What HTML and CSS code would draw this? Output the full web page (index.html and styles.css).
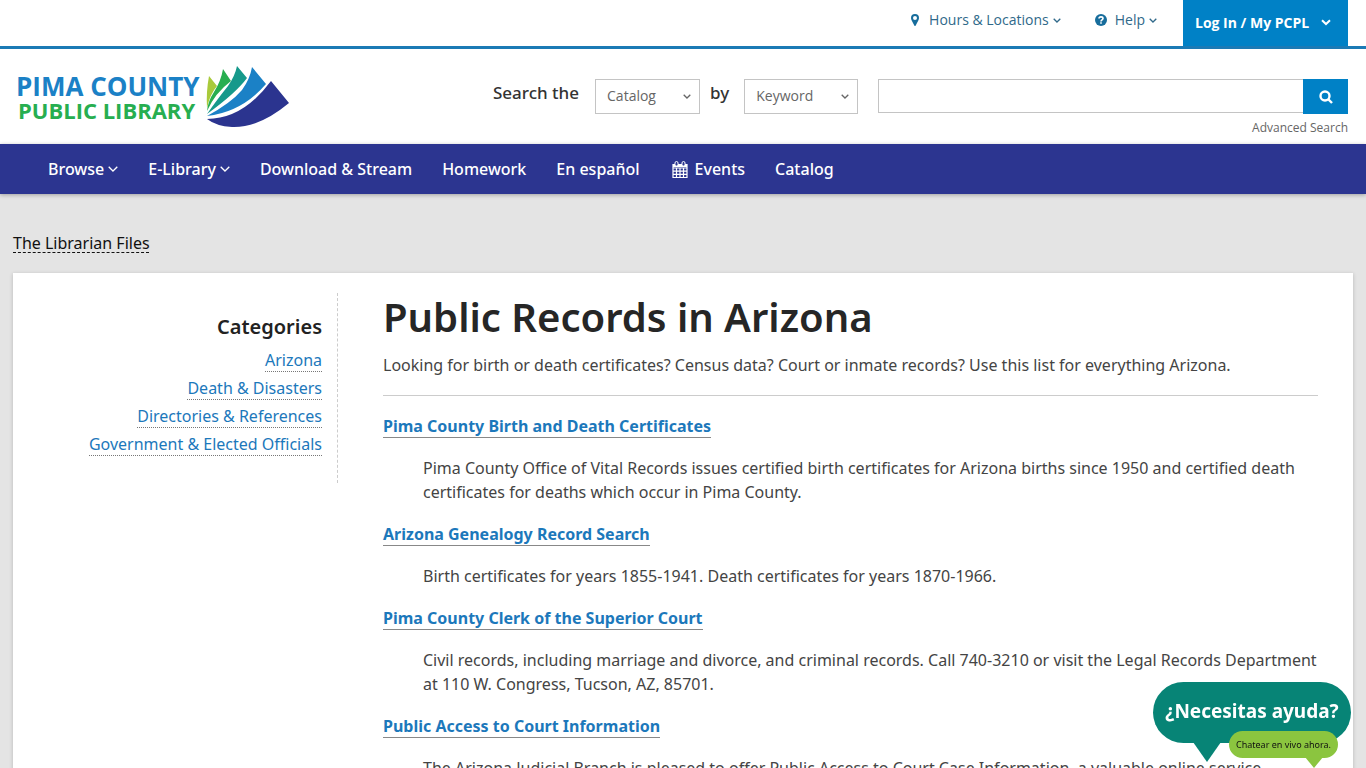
FILE: index.html
```html
<!DOCTYPE html>
<html lang="en">
<head>
    <meta charset="UTF-8">
    <meta name="viewport" content="width=device-width, initial-scale=1.0">
    <title>Public Records in Arizona | Pima County Public Library</title>
    <link rel="stylesheet" href="styles.css">
</head>
<body>

    <div class="top-bar">
        <a href="#" class="top-link">
            <svg class="pin" viewBox="0 0 8 12" width="8" height="12"><path fill-rule="evenodd" d="M4 0a4 4 0 0 1 4 4c0 1-.3 1.600-.7 2.400L4.700 11.500Q4 12.500 3.300 11.500L.7 6.400C.3 5.600 0 5 0 4a4 4 0 0 1 4-4zm0 2a2 2 0 1 0 0 4 2 2 0 0 0 0-4z"/></svg>
            <span>Hours &amp; Locations</span>
            <svg class="caret" viewBox="0 0 8 5" width="8" height="5"><path d="M.7.7 4 4 7.300.7"/></svg>
        </a>
        <a href="#" class="top-link">
            <svg class="help" viewBox="0 0 12 12" width="12" height="12"><circle cx="6" cy="6" r="6"/><path d="M4 4.600C4 2.200 8 2.300 8 4.500 8 5.900 6 5.800 6 7.400" fill="none" stroke="#fff" stroke-width="1.600"/><path d="M5.200 8.200h1.600v1.600H5.200z" fill="#fff"/></svg>
            <span>Help</span>
            <svg class="caret" viewBox="0 0 8 5" width="8" height="5"><path d="M.7.7 4 4 7.300.7"/></svg>
        </a>
        <button class="login">
            <span>Log In / My PCPL</span>
            <svg class="caret bold" viewBox="0 0 10 7" width="10" height="7"><path d="M1 1.200 5 5 9 1.200"/></svg>
        </button>
    </div>

    <header class="header">
        <a href="#" class="logo" aria-label="Pima County Public Library">
            <svg viewBox="0 0 276 64" width="276" height="64">
                <text class="logo-pima" x="0" y="31">PIMA COUNTY</text>
                <text class="logo-public" x="2" y="54">PUBLIC LIBRARY</text>
                <path fill="#a9ca3b" d="M193 11 201 21Q194 29 191 43Q190 27 193 11z"/>
                <path fill="#27ae50" d="M207 4 215 16Q199 28 191 46Q192 36 198 27 205 16 207 4z"/>
                <path fill="#16998b" d="M221 1 231 13Q220 28 191 49Q203 32 212 21 219 11 221 1z"/>
                <path fill="#1b81c6" d="M236 2 250 19Q226 47 191 51Q215 38 226 25 234 14 236 2z"/>
                <path fill="#2b348f" d="M255 16 273 38Q243 63 216 62 200 61 191 54Q227 54 255 16z"/>
            </svg>
        </a>
        <form class="search">
            <label for="source">Search the</label>
            <div class="select">
                <select id="source"><option>Catalog</option><option>Website</option></select>
                <svg class="caret" viewBox="0 0 8 5" width="8" height="5"><path d="M.7.7 4 4 7.300.7"/></svg>
            </div>
            <label for="field" class="by">by</label>
            <div class="select wide">
                <select id="field"><option>Keyword</option><option>Title</option><option>Author</option></select>
                <svg class="caret" viewBox="0 0 8 5" width="8" height="5"><path d="M.7.7 4 4 7.300.7"/></svg>
            </div>
            <div class="query">
                <div class="query-row">
                    <input type="text" aria-label="Search terms">
                    <button type="button" aria-label="Search">
                        <svg viewBox="0 0 14 14" width="14" height="14"><circle cx="6" cy="6" r="4.500"/><path d="m9 9 4 4"/></svg>
                    </button>
                </div>
                <a href="#" class="advanced">Advanced Search</a>
            </div>
        </form>
    </header>

    <nav class="nav">
        <a href="#">Browse <svg class="caret" viewBox="0 0 10 6" width="10" height="6"><path d="M.7.7 5 5 9.300.7"/></svg></a>
        <a href="#">E-Library <svg class="caret" viewBox="0 0 10 6" width="10" height="6"><path d="M.7.7 5 5 9.300.7"/></svg></a>
        <a href="#">Download &amp; Stream</a>
        <a href="#">Homework</a>
        <a href="#">En español</a>
        <a href="#" class="events">
            <svg viewBox="0 0 16 17" width="16" height="17"><path d="M1 3.500h14v13H1zM1 7h14M1 10.200h14M1 13.400h14M4.500 6.500v10M8 6.500v10M11.500 6.500v10" fill="none" stroke="#fff" stroke-width="1.200"/><path d="M1 3h14v3H1z" fill="#fff"/><rect x="3" y=".5" width="3" height="4.500" rx="1.500" fill="#2c3590" stroke="#fff"/><rect x="10" y=".5" width="3" height="4.500" rx="1.500" fill="#2c3590" stroke="#fff"/></svg>
            Events
        </a>
        <a href="#">Catalog</a>
    </nav>

    <div class="page">
        <div class="breadcrumb"><a href="#">The Librarian Files</a></div>

        <div class="card">
            <aside class="sidebar">
                <h2>Categories</h2>
                <ul>
                    <li><a href="#">Arizona</a></li>
                    <li><a href="#">Death &amp; Disasters</a></li>
                    <li><a href="#">Directories &amp; References</a></li>
                    <li><a href="#">Government &amp; Elected Officials</a></li>
                </ul>
            </aside>

            <main class="content">
                <h1>Public Records in Arizona</h1>
                <p class="intro">Looking for birth or death certificates? Census data? Court or inmate records? Use this list for everything Arizona.</p>
                <dl>
                    <dt><a href="#">Pima County Birth and Death Certificates</a></dt>
                    <dd>Pima County Office of Vital Records issues certified birth certificates for Arizona births since 1950 and certified death certificates for deaths which occur in Pima County.</dd>
                    <dt><a href="#">Arizona Genealogy Record Search</a></dt>
                    <dd>Birth certificates for years 1855-1941. Death certificates for years 1870-1966.</dd>
                    <dt><a href="#">Pima County Clerk of the Superior Court</a></dt>
                    <dd>Civil records, including marriage and divorce, and criminal records. Call 740-3210 or visit the Legal Records Department at 110 W. Congress, Tucson, AZ, 85701.</dd>
                    <dt><a href="#">Public Access to Court Information</a></dt>
                    <dd>The Arizona Judicial Branch is pleased to offer Public Access to Court Case Information, a valuable online service</dd>
                </dl>
            </main>
        </div>
    </div>

    <button class="chat">
        <span class="chat-title">¿Necesitas ayuda?</span>
        <span class="chat-sub">Chatear en vivo ahora.</span>
    </button>

</body>
</html>
```

FILE: styles.css
```css
* {
    box-sizing: border-box;
}

body {
    margin: 0;
    background-color: #e4e4e4;
    color: #444;
    font-family: "Noto Sans", sans-serif;
    font-size: 16px;
    line-height: 24px;
}

a {
    color: #1c78bb;
    text-decoration: none;
}

button,
input,
select {
    font-family: inherit;
    margin: 0;
    border-radius: 0;
}

button {
    border: none;
    cursor: pointer;
}

.caret {
    fill: none;
    stroke: currentColor;
    stroke-width: 1.3;
}

.caret.bold {
    stroke-width: 2;
}

/* top bar */
.top-bar {
    display: flex;
    justify-content: flex-end;
    background-color: #fff;
    border-bottom: 3px solid #1b7ab5;
    padding-right: 18px;
    height: 49px;
}

.top-link {
    display: flex;
    align-items: center;
    height: 40px;
    margin-right: 34px;
    color: #30698a;
    font-family: "Open Sans", sans-serif;
    font-size: 14px;
}

.top-link span {
    margin-left: 8px;
    margin-right: 4px;
}

.top-link .pin,
.top-link .help {
    fill: #176d9c;
}

.top-link .pin + span {
    margin-left: 10px;
}

.top-link:nth-child(2) {
    margin-right: 26px;
}

.login {
    display: flex;
    align-items: center;
    gap: 12px;
    width: 165px;
    padding: 0 12px 2px;
    background-color: #0081c6;
    color: #fff;
    font-family: "Open Sans", sans-serif;
    font-size: 14px;
    font-weight: 700;
}

/* header */
.header {
    display: flex;
    justify-content: space-between;
    background-color: #fff;
    height: 95px;
    padding: 16px 18px 0 16px;
}

.logo svg {
    display: block;
}

.logo text {
    font-family: "Open Sans", sans-serif;
    font-weight: 700;
}

.logo-pima {
    fill: #1b81c6;
    font-size: 26px;
}

.logo-public {
    fill: #27ae50;
    font-size: 22px;
}

.search {
    display: flex;
    flex: 1;
    max-width: 855px;
    padding-top: 14px;
}

.search label {
    margin-right: 16px;
    padding-top: 2px;
    color: #333;
    font-size: 17px;
    font-weight: 500;
}

.search .by {
    margin: 0 15px 0 10px;
}

.select {
    position: relative;
    width: 105px;
    height: 35px;
}

.select.wide {
    width: 114px;
}

.select select {
    width: 100%;
    height: 100%;
    padding: 0 11px 2px;
    appearance: none;
    background-color: #fff;
    border: 1px solid #c4c4c4;
    color: #666;
    font-family: "Open Sans", sans-serif;
    font-size: 14px;
}

.select .caret {
    position: absolute;
    right: 9px;
    top: 15px;
    color: #666;
}

.query {
    flex: 1;
    margin-left: 20px;
    text-align: right;
}

.query-row {
    display: flex;
}

.query input {
    flex: 1;
    height: 34px;
    border: 1px solid #c4c4c4;
    border-right: none;
    padding: 0 10px;
}

.query button {
    width: 45px;
    height: 35px;
    padding: 0;
    background-color: #0081c6;
}

.query button svg {
    display: block;
    margin: 0 auto;
    fill: none;
    stroke: #fff;
    stroke-width: 2.4;
}

.advanced {
    color: #666;
    font-family: "Open Sans", sans-serif;
    font-size: 12px;
}

/* navigation */
.nav {
    display: flex;
    align-items: center;
    gap: 30px;
    height: 50px;
    padding-left: 48px;
    background-color: #2c3590;
    box-shadow: 0 1px 4px rgba(0, 0, 0, 0.3);
}

.nav a {
    display: flex;
    align-items: center;
    gap: 4px;
    color: #fff;
    font-weight: 500;
}

.nav .events {
    gap: 7px;
    margin-left: 2px;
}

/* page */
.page {
    padding: 37px 13px 0;
}

.breadcrumb a {
    color: #111;
    text-decoration: underline dashed 1px;
    text-underline-offset: 3px;
    text-decoration-skip-ink: none;
}

.card {
    display: flex;
    align-items: flex-start;
    margin-top: 18px;
    padding: 20px 35px 20px 0;
    background-color: #fff;
    box-shadow: 0 1px 4px rgba(0, 0, 0, 0.2);
}

.sidebar {
    width: 325px;
    height: 190px;
    padding: 21px 15px 0 0;
    border-right: 1px dashed #ccc;
    text-align: right;
}

.sidebar h2 {
    margin: 0 0 8px;
    color: #222;
    font-size: 20px;
    font-weight: 600;
    line-height: 26px;
}

.sidebar ul {
    list-style: none;
    margin: 0;
    padding: 0;
}

.sidebar li {
    height: 28px;
}

.sidebar li a {
    border-bottom: 1px dotted #777;
}

.content {
    flex: 1;
    padding-left: 45px;
}

.content h1 {
    margin: 0 0 12px;
    color: #262626;
    font-size: 40px;
    font-weight: 600;
    line-height: 48px;
}

.intro {
    margin: 0 0 18px;
    padding-bottom: 18px;
    border-bottom: 1px solid #ccc;
}

.content dl {
    margin: 0;
}

.content dt {
    font-weight: 700;
}

.content dt a {
    border-bottom: 1px solid #888;
}

.content dd {
    margin: 18px 0 18px 40px;
}

/* chat bubble */
.chat {
    position: fixed;
    right: 15px;
    bottom: 25px;
    width: 198px;
    height: 61px;
    padding: 0 0 4px;
    background-color: #078476;
    border-radius: 31px;
    color: #fff;
}

.chat-title {
    display: block;
    font-size: 19px;
    font-weight: 700;
}

.chat-sub {
    position: absolute;
    right: 13px;
    top: 49px;
    z-index: 1;
    width: 109px;
    border-radius: 14px;
    background-color: #8bc53f;
    color: #111;
    font-size: 9px;
    line-height: 27px;
}

.chat::after,
.chat-sub::after {
    content: "";
    position: absolute;
    border: solid transparent;
}

.chat::after {
    left: 40px;
    top: 60px;
    border-width: 20px 14px 0;
    border-top-color: #078476;
}

.chat-sub::after {
    right: 15px;
    top: 26px;
    border-width: 11px 9px 0;
    border-top-color: #8bc53f;
}
```
